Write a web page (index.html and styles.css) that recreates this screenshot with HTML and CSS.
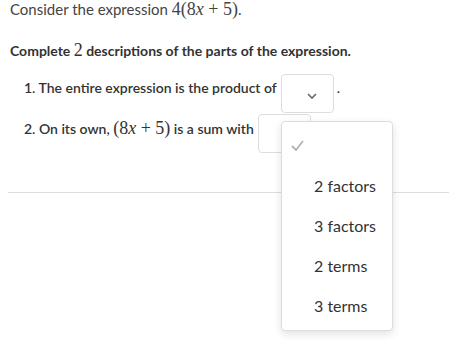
FILE: index.html
```html
<!DOCTYPE html>
<html lang="en">
<head>
    <meta charset="UTF-8">
    <meta name="viewport" content="width=device-width, initial-scale=1.0">
    <title>Parts of an expression</title>
    <link rel="stylesheet" href="styles.css">
</head>
<body>
    <div class="question">
        <p class="intro">Consider the expression <span class="math">4(8<i>x</i> + 5)</span>.</p>
        <p class="task">Complete <span class="math">2</span> descriptions of the parts of the expression.</p>

        <ol class="items">
            <li class="item">
                <span class="item-text">1. The entire expression is the product of</span>
                <span class="select">
                    <svg class="chevron" width="10" height="6" viewBox="0 0 10 6">
                        <polyline points="1,1 5,5 9,1" fill="none" stroke="#666" stroke-width="1.6"/>
                    </svg>
                </span>
                <span class="item-text dot">.</span>
            </li>
            <li class="item">
                <span class="item-text">2. On its own, <span class="math">(8<i>x</i> + 5)</span> is a sum with</span>
                <span class="select"></span>
            </li>
        </ol>

        <hr class="divider">
    </div>

    <div class="dropdown">
        <div class="option selected">
            <svg class="check" width="13" height="11" viewBox="0 0 13 11">
                <polyline points="1,6 5,10 12,1" fill="none" stroke="#b3b3b3" stroke-width="1.8"/>
            </svg>
        </div>
        <div class="option">2 factors</div>
        <div class="option">3 factors</div>
        <div class="option">2 terms</div>
        <div class="option">3 terms</div>
    </div>
</body>
</html>
```

FILE: styles.css
```css
body {
    margin: 0;
    font-family: Lato, "Open Sans", sans-serif;
    color: #333;
    background: #fff;
}
.question {
    padding-left: 10px;
}
.intro {
    margin: 0;
    font-size: 15px;
    line-height: 18px;
    color: #444;
}
.task {
    margin: 23px 0 0;
    font-size: 14px;
    line-height: 18px;
    font-weight: bold;
}
.math {
    font-family: "Liberation Serif", "Times New Roman", serif;
    font-size: 18px;
    font-weight: normal;
}
.math i {
    font-style: italic;
}
.items {
    list-style: none;
    margin: 0;
    padding: 0 0 0 14px;
}
.item {
    display: flex;
    align-items: flex-start;
    height: 40px;
}
.item:first-child {
    margin-top: 14px;
}
.item-text {
    margin-top: 5px;
    font-size: 14px;
    line-height: 18px;
    font-weight: 600;
    color: #333;
}
.dot {
    margin-left: 3px;
}
.select {
    display: flex;
    align-items: center;
    justify-content: flex-end;
    box-sizing: border-box;
    width: 53px;
    height: 39px;
    margin-left: 4px;
    padding: 4px 16px 0 0;
    border: 1px solid #ddd;
    border-radius: 4px;
    background: #fff;
}
.divider {
    margin: 38px 0 0 -2px;
    border: none;
    border-top: 1px solid #ddd;
}
.dropdown {
    position: absolute;
    left: 281px;
    top: 121px;
    box-sizing: border-box;
    width: 112px;
    padding: 3px 0 5px;
    border: 1px solid #ddd;
    border-radius: 4px;
    background: #fff;
    box-shadow: 0 3px 8px rgba(0, 0, 0, 0.12);
}
.option {
    display: flex;
    align-items: center;
    height: 40px;
    padding-left: 32px;
    font-size: 16px;
    color: #333;
}
.selected {
    padding-left: 9px;
}
```
